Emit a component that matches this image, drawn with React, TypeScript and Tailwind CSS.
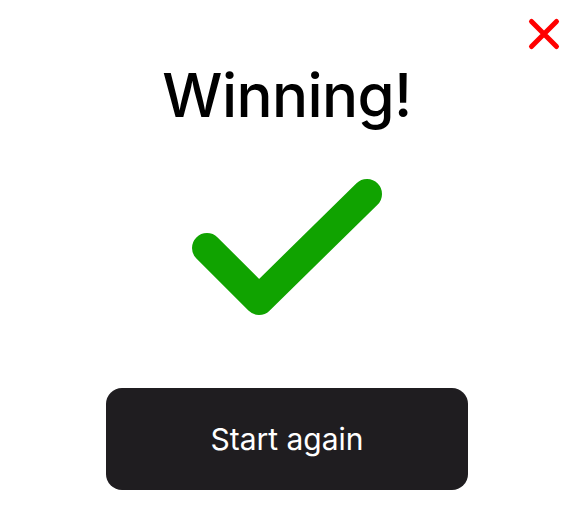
const App = () => {
  return (
    <div className="relative w-full h-[530px] bg-white flex flex-col items-center font-['Inter',sans-serif]">
      <button className="absolute top-[17px] right-[13px] w-[34px] h-[34px] flex items-center justify-center" aria-label="Close">
        <svg width="34" height="34" viewBox="0 0 34 34" fill="none">
          <path d="M4.5 4.5L29.5 29.5M29.5 4.5L4.5 29.5" stroke="#ff0000" strokeWidth="5" strokeLinecap="round" />
        </svg>
      </button>

      <h1 className="mt-[65px] text-[60px] leading-[60px] font-medium text-black tracking-[-0.01em]">
        Winning!
      </h1>

      <svg className="mt-[54px]" width="190" height="136" viewBox="0 0 190 136" fill="none">
        <path d="M15 69L67 121L175 15" stroke="#10a300" strokeWidth="30" strokeLinecap="round" strokeLinejoin="round" />
      </svg>

      <button className="mt-[73px] w-[362px] h-[102px] rounded-2xl bg-[#1f1d20] text-white text-[30px]">
        Start again
      </button>
    </div>
  );
};

export default App;
